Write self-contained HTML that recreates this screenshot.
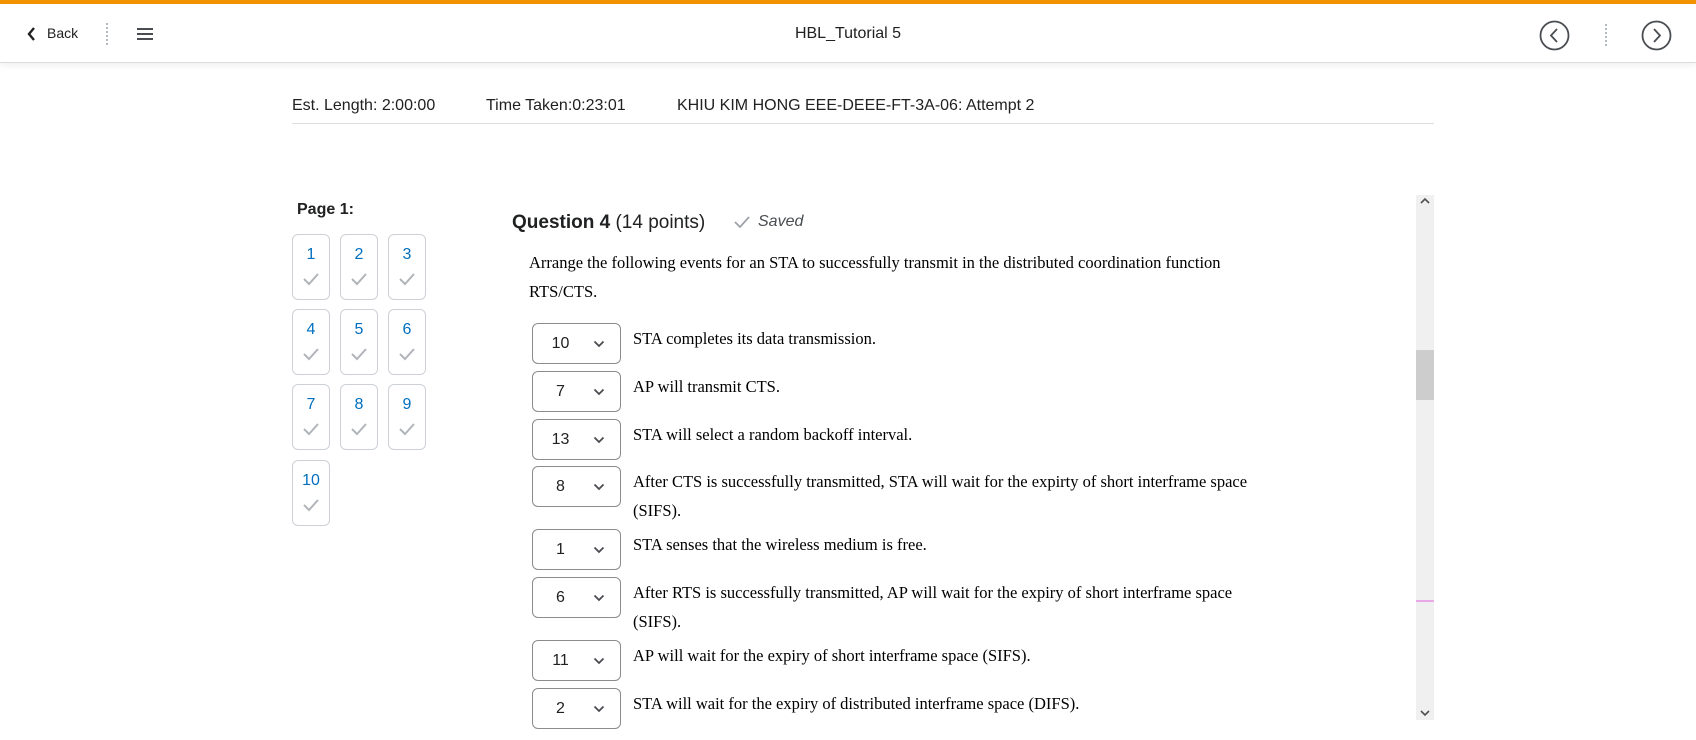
<!DOCTYPE html>
<html><head><meta charset="utf-8"><style>
*{box-sizing:border-box;margin:0;padding:0}
body{width:1696px;height:740px;overflow:hidden;background:#fff;font-family:"Liberation Sans",sans-serif;color:#202122;position:relative}
.abs{position:absolute}
.top{left:0;top:0;width:1696px;height:4px;background:#f39200}
.hdr{left:0;top:4px;width:1696px;height:59px;background:#fff;border-bottom:1px solid #dcdcdc;box-shadow:0 3px 6px rgba(0,0,0,.06)}
.dots{width:2px;height:22px;background-image:linear-gradient(#b5b9c0 50%,transparent 50%);background-size:2px 4px}
.box{width:38px;height:66px;border:1px solid #cdd1d6;border-radius:6px;text-align:center}
.box .n{color:#006fbf;font-size:16px;margin-top:11px;height:20px}
.sel{width:89px;height:41px;border:1px solid #8a8c90;border-radius:6px;left:532px}
.sel span{position:absolute;left:0;width:55px;text-align:center;top:11px;font-size:16px;color:#202122}
.sel svg{position:absolute;left:60px;top:16px}
.t{left:633px;font-family:"Liberation Serif",serif;font-size:16.5px;line-height:29px;color:#000}
</style></head><body>
<div class="abs top"></div>
<div class="abs hdr"></div>
<svg class="abs" style="left:27px;top:26px" width="10" height="16" viewBox="0 0 10 16"><path d="M7 2 L2 8 L7 14" fill="none" stroke="#202122" stroke-width="2.4"/></svg>
<div class="abs" style="left:47px;top:25px;font-size:14px">Back</div>
<div class="abs dots" style="left:106px;top:23px"></div>
<svg class="abs" style="left:137px;top:27px" width="18" height="14"><path d="M0 2H16M0 7H16M0 12H16" stroke="#494c50" stroke-width="2"/></svg>
<div class="abs" style="left:0;width:1696px;text-align:center;top:25px;font-size:16px">HBL_Tutorial 5</div>
<svg class="abs" style="left:1539px;top:20px" width="31" height="31"><circle cx="15.5" cy="15.5" r="14" fill="none" stroke="#494c50" stroke-width="1.8"/><path d="M18 9 L12 15.5 L18 22" fill="none" stroke="#494c50" stroke-width="1.8"/></svg>
<div class="abs dots" style="left:1605px;top:24px"></div>
<svg class="abs" style="left:1641px;top:20px" width="31" height="31"><circle cx="15.5" cy="15.5" r="14" fill="none" stroke="#494c50" stroke-width="1.8"/><path d="M13 9 L19 15.5 L13 22" fill="none" stroke="#494c50" stroke-width="1.8"/></svg>

<div class="abs" style="left:292px;top:97px;font-size:16px">Est. Length: 2:00:00</div>
<div class="abs" style="left:486px;top:97px;font-size:16px">Time Taken:0:23:01</div>
<div class="abs" style="left:677px;top:97px;font-size:16px">KHIU KIM HONG EEE-DEEE-FT-3A-06: Attempt 2</div>
<div class="abs" style="left:292px;top:123px;width:1142px;height:1px;background:#dcdee2"></div>

<div class="abs" style="left:297px;top:201px;font-size:16px;font-weight:bold">Page 1:</div>
<div id="boxes"></div>

<div class="abs" style="left:512px;top:212px;font-size:19px"><b>Question 4</b> (14 points)</div>
<svg class="abs" style="left:734px;top:215px" width="16" height="14"><path d="M1 7 L6 12 L15 2" fill="none" stroke="#9ea2a8" stroke-width="1.8"/></svg>
<div class="abs" style="left:758px;top:213px;font-size:16px;font-style:italic;color:#494c50">Saved</div>
<div class="abs t" style="left:529px;top:248px">Arrange the following events for an STA to successfully transmit in the distributed coordination function<br>RTS/CTS.</div>

<div id="rows"></div>

<div class="abs" style="left:1416px;top:195px;width:18px;height:525px;background:#f0f0f0"></div>
<div class="abs" style="left:1416px;top:350px;width:18px;height:50px;background:#cdcdcd"></div>
<div class="abs" style="left:1416px;top:600px;width:18px;height:2px;background:#eaa8e6"></div>
<svg class="abs" style="left:1419px;top:197px" width="12" height="8"><path d="M2 6 L6 2 L10 6" fill="none" stroke="#505050" stroke-width="1.6"/></svg>
<svg class="abs" style="left:1419px;top:709px" width="12" height="8"><path d="M2 2 L6 6 L10 2" fill="none" stroke="#505050" stroke-width="1.6"/></svg>

<script>
var b='',xs=[292,340,388],ys=[234,309,384,460];
for(var i=0;i<10;i++){var x=xs[i%3],y=ys[Math.floor(i/3)];
b+='<div class="abs box" style="left:'+x+'px;top:'+y+'px"><div class="n">'+(i+1)+'</div><svg width="16" height="14" style="margin-top:6px"><path d="M1 7 L6 12 L15 2" fill="none" stroke="#b1b5ba" stroke-width="2"/></svg></div>';}
document.getElementById('boxes').innerHTML=b;
var r=[[323,'10','STA completes its data transmission.'],[371,'7','AP will transmit CTS.'],[419,'13','STA will select a random backoff interval.'],[466,'8','After CTS is successfully transmitted, STA will wait for the expirty of short interframe space<br>(SIFS).'],[529,'1','STA senses that the wireless medium is free.'],[577,'6','After RTS is successfully transmitted, AP will wait for the expiry of short interframe space<br>(SIFS).'],[640,'11','AP will wait for the expiry of short interframe space (SIFS).'],[688,'2','STA will wait for the expiry of distributed interframe space (DIFS).']];
var h='';r.forEach(function(a){h+='<div class="abs sel" style="top:'+a[0]+'px"><span>'+a[1]+'</span><svg width="12" height="8"><path d="M1.5 1.5 L6 6 L10.5 1.5" fill="none" stroke="#494c50" stroke-width="1.8"/></svg></div><div class="abs t" style="top:'+(a[0]+1)+'px">'+a[2]+'</div>';});
document.getElementById('rows').innerHTML=h;
</script>
</body></html>
